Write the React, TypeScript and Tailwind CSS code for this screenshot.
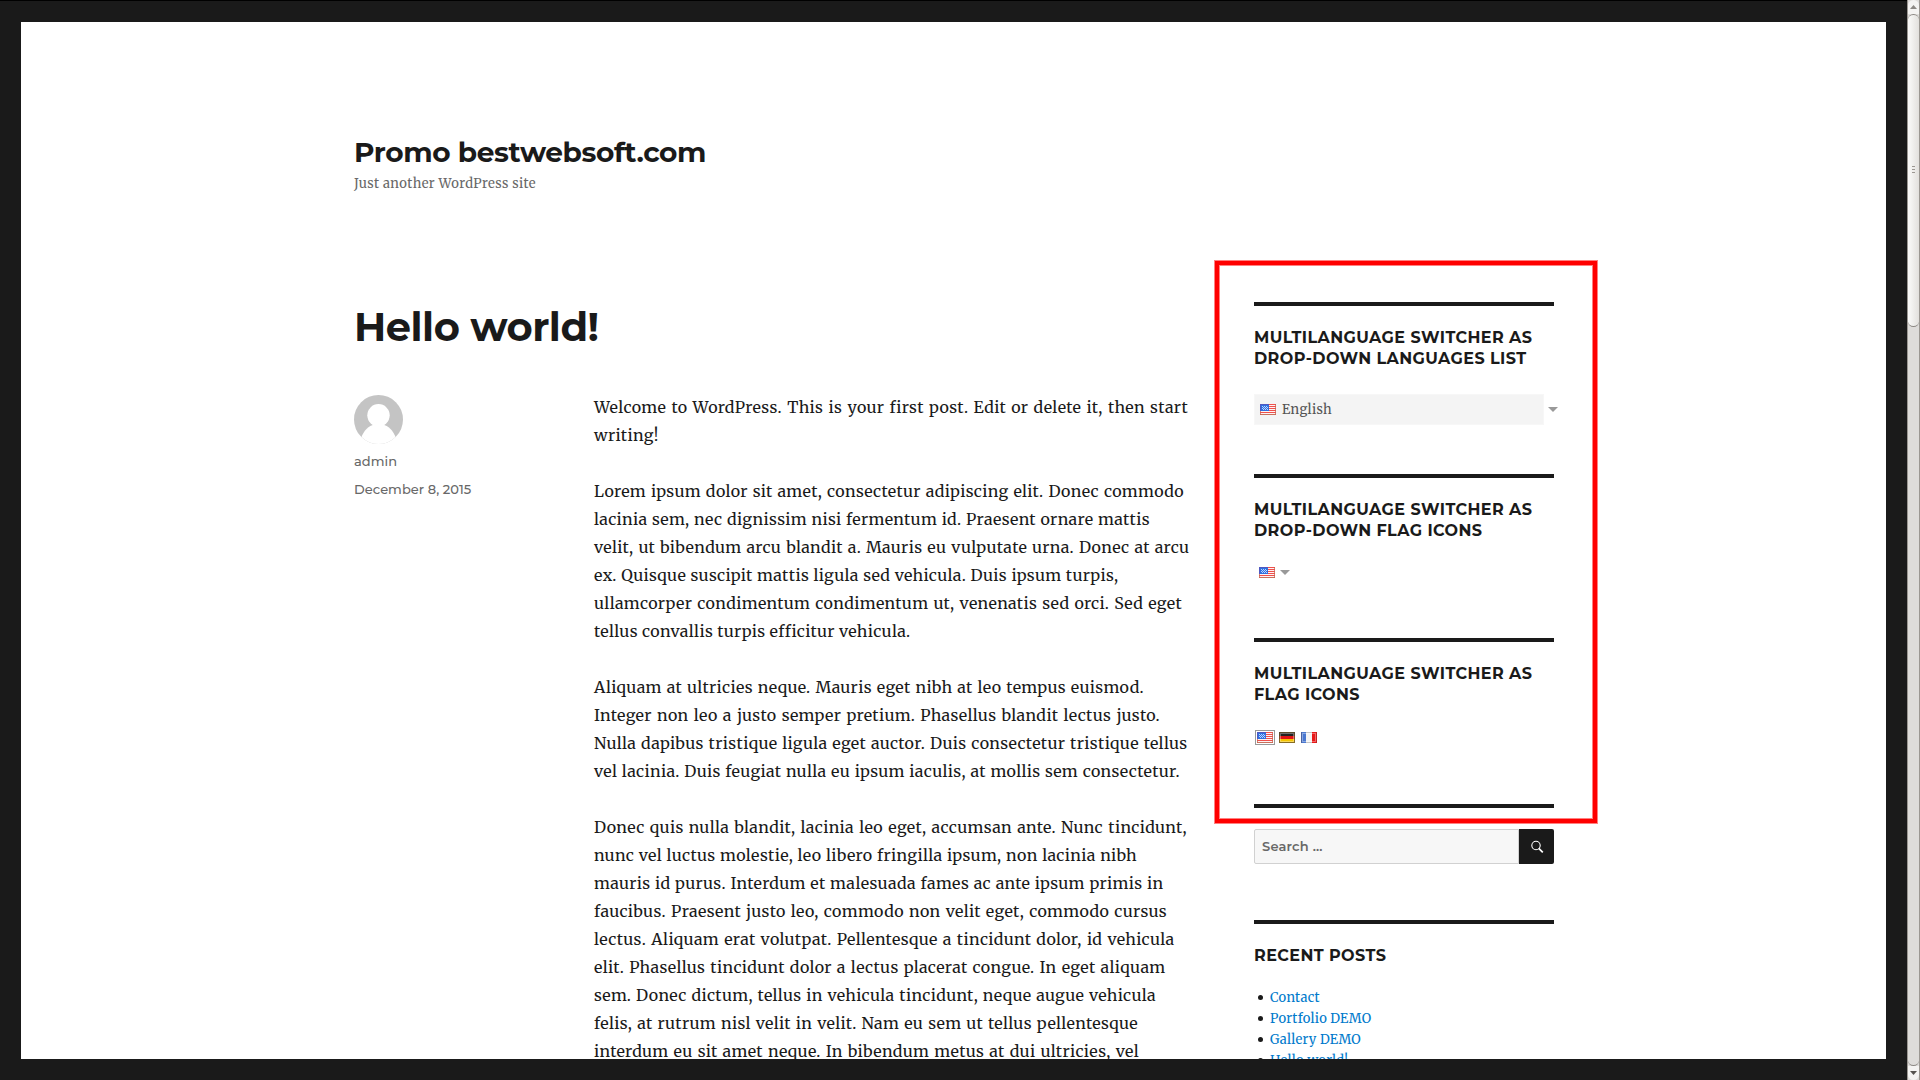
import type { ReactNode } from "react";

type Line = { text: string; width: string };

const paragraphs: Line[][] = [
  [
    { text: "Welcome to WordPress. This is your first post. Edit or delete it, then start", width: "w-[594px]" },
    { text: "writing!", width: "w-[65px]" },
  ],
  [
    { text: "Lorem ipsum dolor sit amet, consectetur adipiscing elit. Donec commodo", width: "w-[590px]" },
    { text: "lacinia sem, nec dignissim nisi fermentum id. Praesent ornare mattis", width: "w-[556px]" },
    { text: "velit, ut bibendum arcu blandit a. Mauris eu vulputate urna. Donec at arcu", width: "w-[595.5px]" },
    { text: "ex. Quisque suscipit mattis ligula sed vehicula. Duis ipsum turpis,", width: "w-[524.5px]" },
    { text: "ullamcorper condimentum condimentum ut, venenatis sed orci. Sed eget", width: "w-[588px]" },
    { text: "tellus convallis turpis efficitur vehicula.", width: "w-[316px]" },
  ],
  [
    { text: "Aliquam at ultricies neque. Mauris eget nibh at leo tempus euismod.", width: "w-[550px]" },
    { text: "Integer non leo a justo semper pretium. Phasellus blandit lectus justo.", width: "w-[566px]" },
    { text: "Nulla dapibus tristique ligula eget auctor. Duis consectetur tristique tellus", width: "w-[593.5px]" },
    { text: "vel lacinia. Duis feugiat nulla eu ipsum iaculis, at mollis sem consectetur.", width: "w-[586px]" },
  ],
  [
    { text: "Donec quis nulla blandit, lacinia leo eget, accumsan ante. Nunc tincidunt,", width: "w-[593px]" },
    { text: "nunc vel luctus molestie, leo libero fringilla ipsum, non lacinia nibh", width: "w-[543px]" },
    { text: "mauris id purus. Interdum et malesuada fames ac ante ipsum primis in", width: "w-[569.5px]" },
    { text: "faucibus. Praesent justo leo, commodo non velit eget, commodo cursus", width: "w-[573px]" },
    { text: "lectus. Aliquam erat volutpat. Pellentesque a tincidunt dolor, id vehicula", width: "w-[580.5px]" },
    { text: "elit. Phasellus tincidunt dolor a lectus placerat congue. In eget aliquam", width: "w-[571.5px]" },
    { text: "sem. Donec dictum, tellus in vehicula tincidunt, neque augue vehicula", width: "w-[562px]" },
    { text: "felis, at rutrum nisl velit in velit. Nam eu sem ut tellus pellentesque", width: "w-[544px]" },
    { text: "interdum eu sit amet neque. In bibendum metus at dui ultricies, vel", width: "w-[545px]" },
  ],
];

const recentPosts = ["Contact", "Portfolio DEMO", "Gallery DEMO", "Hello world!"];

function UsFlag() {
  return (
    <svg width="16" height="11" viewBox="0 0 16 11" shapeRendering="crispEdges" className="block shrink-0">
      <rect width="16" height="11" fill="#fdf3f3" />
      {[0, 2, 4, 6, 8, 10].map((y) => (
        <rect key={y} y={y} width="16" height="1" fill={y === 10 ? "#c9705c" : "#f0504c"} />
      ))}
      <rect width="9" height="7" fill="#3070e0" />
      <path d="M0 0H9V1H1V7H0Z" fill="#5058c0" />
      <path
        d="M2 2h1v1h-1zM4 2h1v1h-1zM6 2h1v1h-1zM3 3h1v1h-1zM5 3h1v1h-1zM7 3h1v1h-1zM2 4h1v1h-1zM4 4h1v1h-1zM6 4h1v1h-1zM3 5h1v1h-1zM5 5h1v1h-1zM7 5h1v1h-1z"
        fill="#b8d4ff"
      />
      <path d="M0 7h1v4h-1zM15 0h1v11h-1z" fill="#c8604c" fillOpacity=".75" />
    </svg>
  );
}

function GermanFlag() {
  return (
    <svg width="16" height="11" viewBox="0 0 16 11" className="block shrink-0">
      <rect width="16" height="4" fill="#222" />
      <rect y="4" width="16" height="3" fill="#e01414" />
      <rect y="7" width="16" height="4" fill="#f4c400" />
      <rect x="1.5" y="1.5" width="13" height="8" fill="none" stroke="#fff" strokeOpacity=".35" />
      <rect x=".5" y=".5" width="15" height="10" fill="none" stroke="#6b5630" strokeOpacity=".8" />
    </svg>
  );
}

function FrenchFlag() {
  return (
    <svg width="16" height="11" viewBox="0 0 16 11" className="block shrink-0">
      <rect width="16" height="11" fill="#f4f4f4" />
      <rect width="5" height="11" fill="#4a78d0" />
      <rect x="11" width="5" height="11" fill="#e81818" />
      <rect x="1.5" y="1.5" width="13" height="8" fill="none" stroke="#fff" strokeOpacity=".35" />
      <path d="M5 0h6v1h-6zM5 10h6v1h-6z" fill="#c4c4c4" />
      <path d="M0 0h1v11h-1z" fill="#4c62a0" />
      <path d="M15 0h1v11h-1z" fill="#c02020" />
    </svg>
  );
}

function Caret() {
  return (
    <svg width="10" height="5" viewBox="0 0 10 5" className="block shrink-0">
      <path d="M0 0H10L5 5Z" fill="#999" />
    </svg>
  );
}

function Avatar() {
  return (
    <svg width="49" height="49" viewBox="0 0 49 49" className="block">
      <defs>
        <clipPath id="avatar">
          <circle cx="24.5" cy="24.5" r="24.5" />
        </clipPath>
      </defs>
      <g clipPath="url(#avatar)">
        <rect width="49" height="49" fill="#c4c4c4" />
        <circle cx="24.5" cy="20.3" r="11.2" fill="#fff" />
        <path d="M7 43C10 35 15 31 20 29.5H29C34 31 39 35 42 43V49H7Z" fill="#fff" />
      </g>
    </svg>
  );
}

function Widget({ className, children }: { className?: string; children: ReactNode }) {
  return <section className={`border-t-4 border-[#1a1a1a] pt-[21px] ${className ?? ""}`}>{children}</section>;
}

function WidgetTitle({ children }: { children: ReactNode }) {
  return (
    <h2 className="whitespace-nowrap font-['Montserrat',sans-serif] text-base font-bold leading-[21px] tracking-[0.4px]">
      {children}
    </h2>
  );
}

function Scrollbar() {
  return (
    <div className="flex h-full w-[13px] shrink-0 flex-col border-x border-[#9b9792] bg-[#dedcda]">
      <div className="flex h-[14px] shrink-0 items-center justify-center rounded-t-full bg-[#f4f3f2]">
        <svg width="7" height="4" viewBox="0 0 7 4">
          <path d="M3.5 0L7 4H0Z" fill="#8c8884" />
        </svg>
      </div>
      <div className="flex h-[313px] shrink-0 flex-col items-center justify-center gap-[2px] rounded-full border-y border-[#8c8884] bg-linear-to-r from-[#fbfbfa] to-[#e2e0dd] pb-[2px]">
        <i className="h-px w-[3px] bg-[#9b9792]" />
        <i className="h-px w-[3px] bg-[#9b9792]" />
        <i className="h-px w-[3px] bg-[#9b9792]" />
      </div>
      <div className="flex-1 rounded-b-full border-b border-[#8c8884] bg-[#dedcda]" />
      <div className="flex h-[14px] shrink-0 items-center justify-center rounded-b-full bg-[#f4f3f2]">
        <svg width="7" height="4" viewBox="0 0 7 4">
          <path d="M0 0H7L3.5 4Z" fill="#55524f" />
        </svg>
      </div>
    </div>
  );
}

export default function App() {
  return (
    <div className="relative flex h-[1080px] w-[1920px] overflow-hidden bg-[#1a1a1a] text-[#1a1a1a]">
      <div className="flex-1 border-t border-black p-[21px]">
        <div className="h-full overflow-hidden bg-white pl-[333px] pt-[113px]">
          <header className="h-[167px]">
            <h1 className="font-['Montserrat',sans-serif] text-[28px] font-bold leading-[35px] tracking-[-0.4px]">
              Promo bestwebsoft.com
            </h1>
            <p className="pt-[5px] font-['Merriweather',serif] text-[13px] leading-[18px] tracking-[0.4px] text-[#686868]">
              Just another WordPress site
            </p>
          </header>

          <div className="flex w-[1200px] justify-between">
            <main className="w-[600px] flex-none">
              <h2 className="font-['Montserrat',sans-serif] text-[40px] font-bold leading-[49px] tracking-[-0.5px]">
                Hello world!
              </h2>
              <div className="flex pt-[42px]">
                <aside className="w-60 flex-none pt-[2px] font-['Montserrat',sans-serif] text-[13px] font-medium leading-7 tracking-[0.04px] text-[#686868]">
                  <Avatar />
                  <p className="pt-[3px]">admin</p>
                  <p>December 8, 2015</p>
                </aside>
                <article className="flex flex-none flex-col gap-7 font-['Merriweather',serif] text-base leading-7 tracking-[0.33px]">
                  {paragraphs.map((lines) => (
                    <p key={lines[0].text}>
                      {lines.map((line) => (
                        <span key={line.text} className={`block whitespace-nowrap [text-align-last:justify] ${line.width}`}>
                          {line.text}
                        </span>
                      ))}
                    </p>
                  ))}
                </article>
              </div>
            </main>

            <aside className="flex w-[300px] flex-none flex-col">
              <Widget className="h-[172px]">
                <WidgetTitle>
                  MULTILANGUAGE SWITCHER AS
                  <br />
                  DROP-DOWN LANGUAGES LIST
                </WidgetTitle>
                <div className="mt-[25px] flex w-[304px] items-center justify-between">
                  <div className="flex h-[31px] w-[290px] items-center gap-[6px] border border-[#f7f7f7] bg-[#f4f4f4] pl-[5px]">
                    <UsFlag />
                    <span className="font-['Merriweather',serif] text-[13px] tracking-[0.35px] text-[#555]">English</span>
                  </div>
                  <Caret />
                </div>
              </Widget>

              <Widget className="h-[164px]">
                <WidgetTitle>
                  MULTILANGUAGE SWITCHER AS
                  <br />
                  DROP-DOWN FLAG ICONS
                </WidgetTitle>
                <div className="flex items-center gap-[5px] pl-[5px] pt-[26px]">
                  <UsFlag />
                  <Caret />
                </div>
              </Widget>

              <Widget className="h-[166px]">
                <WidgetTitle>
                  MULTILANGUAGE SWITCHER AS
                  <br />
                  FLAG ICONS
                </WidgetTitle>
                <div className="flex items-center pl-px pt-[25px]">
                  <div className="mr-1 border border-[#999] p-px">
                    <UsFlag />
                  </div>
                  <div className="mr-[6px]">
                    <GermanFlag />
                  </div>
                  <FrenchFlag />
                </div>
              </Widget>

              <Widget className="h-[116px]">
                <div className="flex h-[35px]">
                  <div className="flex flex-1 items-center rounded-l-xs border border-[#d1d1d1] bg-[#f7f7f7] pl-[7px] font-['Montserrat',sans-serif] text-[13px] font-semibold tracking-[0.2px] text-[#686868]">
                    Search …
                  </div>
                  <div className="flex w-[35px] items-center justify-center rounded-r-xs bg-[#1a1a1a]">
                    <svg width="14" height="14" viewBox="0 0 14 14" fill="none" stroke="#fff">
                      <circle cx="6" cy="5.5" r="4.2" strokeWidth="1.1" />
                      <path d="M8.8 8.3L12.8 12.3" strokeWidth="1.7" />
                    </svg>
                  </div>
                </div>
              </Widget>

              <Widget>
                <WidgetTitle>RECENT POSTS</WidgetTitle>
                <ul className="pt-[21px] font-['Merriweather',serif] text-[13px] leading-[21px] tracking-[0.25px] text-[#007acc]">
                  {recentPosts.map((post) => (
                    <li key={post} className="flex items-center gap-[7px] pl-1">
                      <i className="size-[5px] rounded-full bg-[#1a1a1a]" />
                      {post}
                    </li>
                  ))}
                </ul>
              </Widget>
            </aside>
          </div>
        </div>
      </div>

      <Scrollbar />

      <div className="absolute left-[1214px] top-[260px] h-[564px] w-[384px] border border-[#ff8080]">
        <div className="h-full w-full border-4 border-[#ff0000]">
          <div className="h-full w-full border border-[#ff8080]" />
        </div>
      </div>
    </div>
  );
}
